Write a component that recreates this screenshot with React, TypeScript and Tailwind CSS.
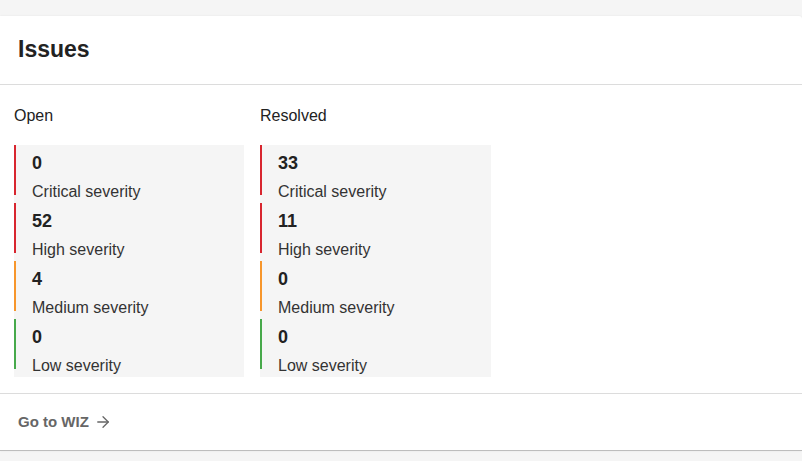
import React from 'react';
import { ArrowRight } from 'lucide-react';

type Item = { count: number; label: string; color: string };

const open: Item[] = [
  { count: 0, label: 'Critical severity', color: 'border-[#d8262f]' },
  { count: 52, label: 'High severity', color: 'border-[#d8262f]' },
  { count: 4, label: 'Medium severity', color: 'border-[#f7962c]' },
  { count: 0, label: 'Low severity', color: 'border-[#47a94b]' },
];

const resolved: Item[] = [
  { count: 33, label: 'Critical severity', color: 'border-[#d8262f]' },
  { count: 11, label: 'High severity', color: 'border-[#d8262f]' },
  { count: 0, label: 'Medium severity', color: 'border-[#f7962c]' },
  { count: 0, label: 'Low severity', color: 'border-[#47a94b]' },
];

const Column: React.FC<{ title: string; items: Item[] }> = ({ title, items }) => (
  <div className="flex flex-col">
    <div className="text-[16px] leading-[24px] text-[#222] mb-[17px]">{title}</div>
    <div className="bg-[#f5f5f5] flex flex-col pb-2">
      {items.map((it, i) => (
        <div
          key={i}
          className={`h-[50px] border-l-2 ${it.color} pl-4 flex flex-col ${i < items.length - 1 ? 'mb-2' : ''}`}
        >
          <div className="mt-[6px] text-[18px] leading-[24px] font-bold text-[#222]">{it.count}</div>
          <div className="mt-[7px] text-[16px] leading-[20px] text-[#333]">{it.label}</div>
        </div>
      ))}
    </div>
  </div>
);

export default function App() {
  return (
    <div
      className="min-h-[461px] bg-[#f5f5f5] pt-4"
      style={{ fontFamily: '"Liberation Sans", Arial, sans-serif' }}
    >
      <div className="bg-white rounded-tr-[3px] border-b border-[#bdbdbd] shadow-[0_0_2px_rgba(0,0,0,0.08)]">
        <div className="h-[69px] flex items-center px-[18px] pb-[1px] border-b border-[#dcdcdc]">
          <h1 className="text-[23px] font-bold text-[#222]">Issues</h1>
        </div>
        <div className="pl-[14px] pt-[19px] pb-4 flex gap-4 border-b border-[#dcdcdc]">
          <div className="w-[230px]">
            <Column title="Open" items={open} />
          </div>
          <div className="w-[231px]">
            <Column title="Resolved" items={resolved} />
          </div>
        </div>
        <div className="h-[56px] flex items-center px-[18px]">
          <a className="flex items-center gap-[5px] text-[15px] leading-[20px] font-bold text-[#666]">
            Go to WIZ
            <ArrowRight size={18} strokeWidth={1.7} />
          </a>
        </div>
      </div>
    </div>
  );
}
